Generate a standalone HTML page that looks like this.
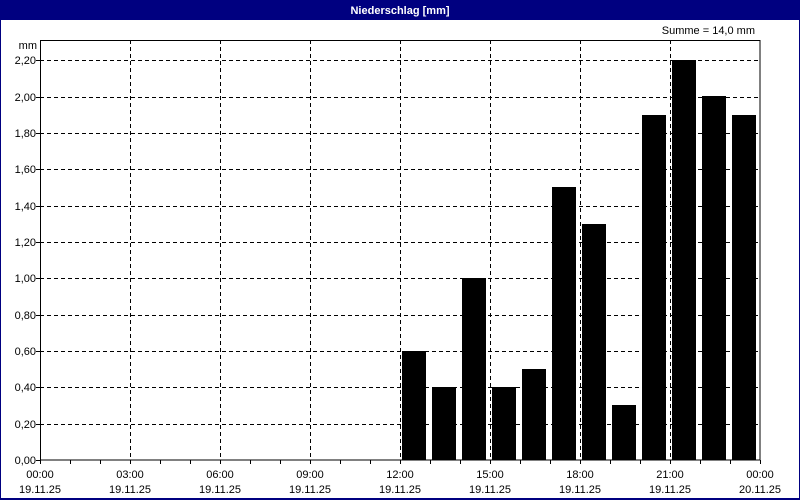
<!DOCTYPE html>
<html><head><meta charset="utf-8"><style>
html,body{margin:0;padding:0;background:#fff}
svg{display:block}
text{font-family:"Liberation Sans",sans-serif;font-size:11px;fill:#000}
</style></head><body>
<svg width="800" height="500" xmlns="http://www.w3.org/2000/svg">
<rect x="0" y="0" width="800" height="500" fill="#fff"/>
<rect x="0" y="0" width="800" height="20" fill="#000080"/>
<rect x="0.5" y="0.5" width="799" height="498" fill="none" stroke="#000080"/>
<rect x="0" y="498" width="800" height="2" fill="#000080"/>
<text x="400" y="14" text-anchor="middle" style="fill:#fff;font-weight:bold">Niederschlag [mm]</text>
<text x="755" y="34" text-anchor="end">Summe = 14,0 mm</text>
<text x="37" y="49" text-anchor="end">mm</text>
<g stroke="#000" stroke-width="1" stroke-dasharray="4,3" fill="none">
<path d="M40 424.5H760M40 387.5H760M40 351.5H760M40 315.5H760M40 278.5H760M40 242.5H760M40 206.5H760M40 169.5H760M40 133.5H760M40 97.5H760M40 60.5H760"/>
<path d="M130.5 40V460M220.5 40V460M310.5 40V460M400.5 40V460M490.5 40V460M580.5 40V460M670.5 40V460"/>
</g>
<g fill="#000">
<rect x="402" y="351" width="24" height="109"/>
<rect x="432" y="387" width="24" height="73"/>
<rect x="462" y="278" width="24" height="182"/>
<rect x="492" y="387" width="24" height="73"/>
<rect x="522" y="369" width="24" height="91"/>
<rect x="552" y="187" width="24" height="273"/>
<rect x="582" y="224" width="24" height="236"/>
<rect x="612" y="405" width="24" height="55"/>
<rect x="642" y="115" width="24" height="345"/>
<rect x="672" y="60" width="24" height="400"/>
<rect x="702" y="96" width="24" height="364"/>
<rect x="732" y="115" width="24" height="345"/>
</g>
<rect x="40.5" y="40.5" width="719.5" height="419.5" fill="none" stroke="#000"/>
<g stroke="#000">
<path d="M40.5 460V464M70.5 460V464M100.5 460V464M130.5 460V464M160.5 460V464M190.5 460V464M220.5 460V464M250.5 460V464M280.5 460V464M310.5 460V464M340.5 460V464M370.5 460V464M400.5 460V464M430.5 460V464M460.5 460V464M490.5 460V464M520.5 460V464M550.5 460V464M580.5 460V464M610.5 460V464M640.5 460V464M670.5 460V464M700.5 460V464M730.5 460V464M760.5 460V464"/>
<path d="M36 460.5H40M36 424.5H40M36 387.5H40M36 351.5H40M36 315.5H40M36 278.5H40M36 242.5H40M36 206.5H40M36 169.5H40M36 133.5H40M36 97.5H40M36 60.5H40"/>
</g>
<g text-anchor="end">
<text x="36" y="464">0,00</text><text x="36" y="428">0,20</text><text x="36" y="391">0,40</text>
<text x="36" y="355">0,60</text><text x="36" y="319">0,80</text><text x="36" y="282">1,00</text>
<text x="36" y="246">1,20</text><text x="36" y="210">1,40</text><text x="36" y="173">1,60</text>
<text x="36" y="137">1,80</text><text x="36" y="101">2,00</text><text x="36" y="64">2,20</text>
</g>
<g text-anchor="middle">
<text x="40" y="478">00:00</text><text x="40" y="493">19.11.25</text>
<text x="130" y="478">03:00</text><text x="130" y="493">19.11.25</text>
<text x="220" y="478">06:00</text><text x="220" y="493">19.11.25</text>
<text x="310" y="478">09:00</text><text x="310" y="493">19.11.25</text>
<text x="400" y="478">12:00</text><text x="400" y="493">19.11.25</text>
<text x="490" y="478">15:00</text><text x="490" y="493">19.11.25</text>
<text x="580" y="478">18:00</text><text x="580" y="493">19.11.25</text>
<text x="670" y="478">21:00</text><text x="670" y="493">19.11.25</text>
<text x="760" y="478">00:00</text><text x="760" y="493">20.11.25</text>
</g>
</svg>
</body></html>
